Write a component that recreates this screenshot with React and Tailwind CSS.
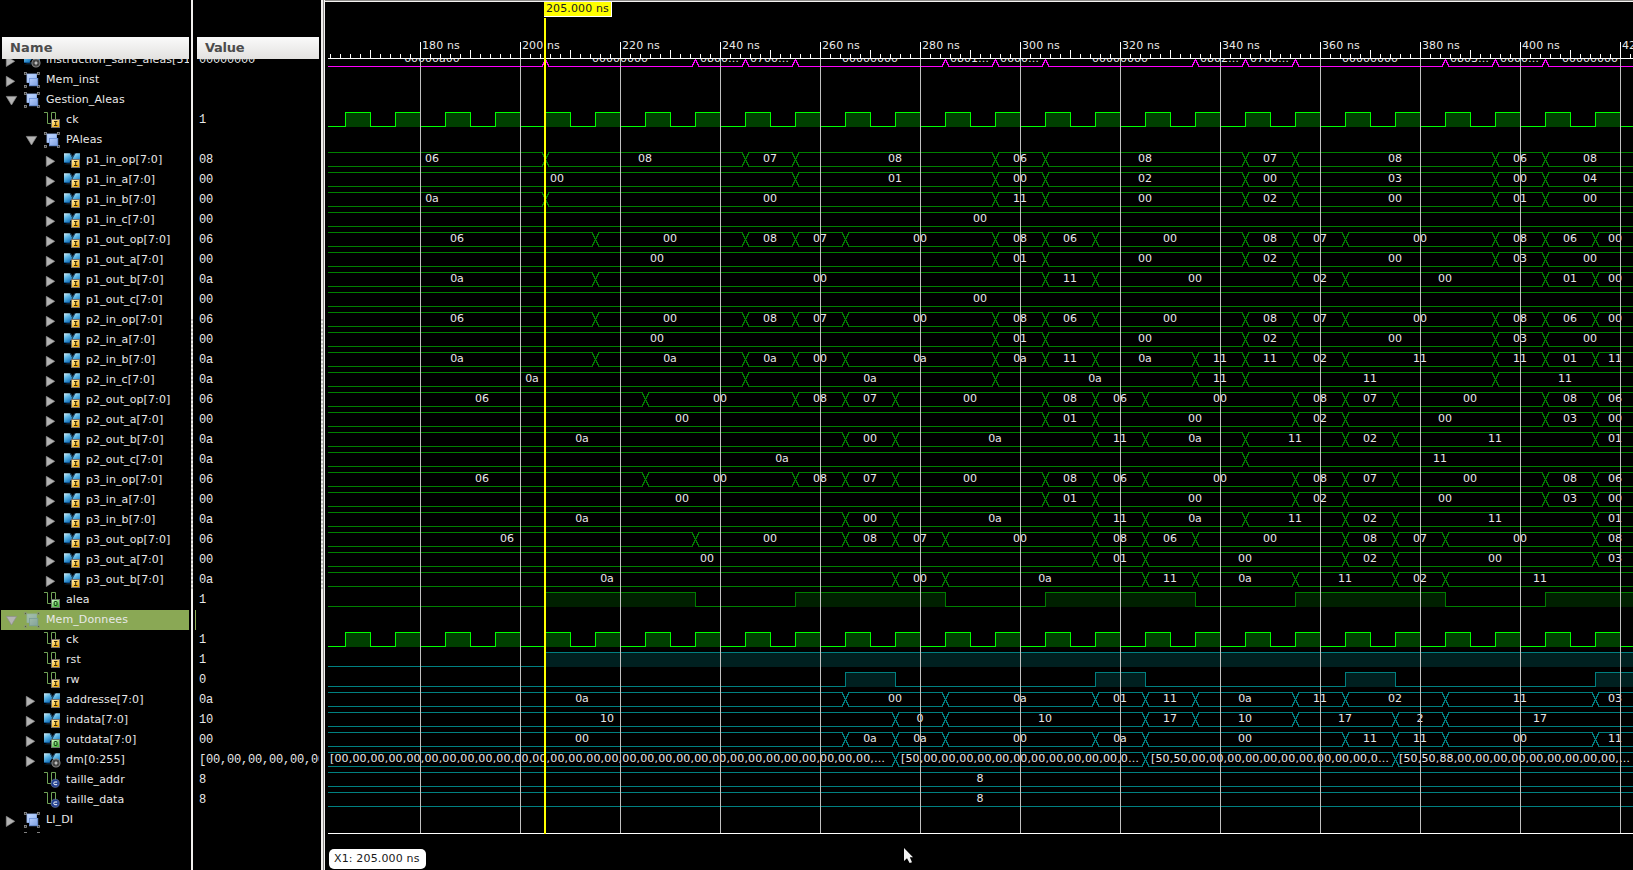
import React from "react";

const BRIGHT = "#00ff00";
const GREEN = "#008000";
const TEAL = "#008080";
const MAGENTA = "#ff00ff";

const bus = (color, times, values) => ({ kind: "bus", color, times, values });
const bit = (color, fill, times) => ({ kind: "bit", color, fill, times });

const clockTimes = Array.from({ length: 52 }, (_, i) => 165 + i * 5);
const clock = bit(BRIGHT, "#004000", clockTimes);

const opStage1 = bus(GREEN, [215, 245, 255, 265, 295, 305, 315, 345, 355, 365, 395, 405, 415], ["06", "00", "08", "07", "00", "08", "06", "00", "08", "07", "00", "08", "06", "00"]);
const aStage1 = bus(GREEN, [295, 305, 345, 355, 395, 405], ["00", "01", "00", "02", "00", "03", "00"]);
const opStage2 = bus(GREEN, [225, 255, 265, 275, 305, 315, 325, 355, 365, 375, 405, 415], ["06", "00", "08", "07", "00", "08", "06", "00", "08", "07", "00", "08", "06"]);
const aStage2 = bus(GREEN, [305, 315, 355, 365, 405, 415], ["00", "01", "00", "02", "00", "03", "00"]);
const bStage2 = bus(GREEN, [265, 275, 315, 325, 345, 365, 375, 415], ["0a", "00", "0a", "11", "0a", "11", "02", "11", "01"]);

const rows = [
  {
    name: "instruction_sans_aleas[31:0]", value: "00000000", level: 0, icon: "bus", badge: "gear", arrow: "right",
    wave: bus(MAGENTA, [205, 235, 245, 255, 285, 295, 305, 335, 345, 355, 385, 395, 405],
      ["00000a00", "00000000", "0800…", "0700…", "00000000", "0801…", "0600…", "00000000", "0802…", "0700…", "00000000", "0803…", "0600…", "00000000"]),
  },
  { name: "Mem_inst", level: 0, icon: "group", arrow: "right" },
  { name: "Gestion_Aleas", level: 0, icon: "group", arrow: "down" },
  { name: "ck", value: "1", level: 1, icon: "bit", badge: "I", wave: clock },
  { name: "PAleas", level: 1, icon: "group", arrow: "down" },
  ...[
    ["p1_in_op", "08", bus(GREEN, [205, 245, 255, 295, 305, 345, 355, 395, 405], ["06", "08", "07", "08", "06", "08", "07", "08", "06", "08"])],
    ["p1_in_a", "00", bus(GREEN, [255, 295, 305, 345, 355, 395, 405], ["00", "01", "00", "02", "00", "03", "00", "04"])],
    ["p1_in_b", "00", bus(GREEN, [205, 295, 305, 345, 355, 395, 405], ["0a", "00", "11", "00", "02", "00", "01", "00"])],
    ["p1_in_c", "00", bus(GREEN, [], ["00"])],
    ["p1_out_op", "06", opStage1],
    ["p1_out_a", "00", aStage1],
    ["p1_out_b", "0a", bus(GREEN, [215, 305, 315, 355, 365, 405, 415], ["0a", "00", "11", "00", "02", "00", "01", "00"])],
    ["p1_out_c", "00", bus(GREEN, [], ["00"])],
    ["p2_in_op", "06", opStage1],
    ["p2_in_a", "00", aStage1],
    ["p2_in_b", "0a", bus(GREEN, [215, 245, 255, 265, 295, 305, 315, 335, 345, 355, 365, 395, 405, 415], ["0a", "0a", "0a", "00", "0a", "0a", "11", "0a", "11", "11", "02", "11", "11", "01", "11"])],
    ["p2_in_c", "0a", bus(GREEN, [245, 295, 335, 345, 395], ["0a", "0a", "0a", "11", "11", "11"])],
    ["p2_out_op", "06", opStage2],
    ["p2_out_a", "00", aStage2],
    ["p2_out_b", "0a", bStage2],
    ["p2_out_c", "0a", bus(GREEN, [345], ["0a", "11"])],
    ["p3_in_op", "06", opStage2],
    ["p3_in_a", "00", aStage2],
    ["p3_in_b", "0a", bStage2],
    ["p3_out_op", "06", bus(GREEN, [235, 265, 275, 285, 315, 325, 335, 365, 375, 385, 415], ["06", "00", "08", "07", "00", "08", "06", "00", "08", "07", "00", "08"])],
    ["p3_out_a", "00", bus(GREEN, [315, 325, 365, 375, 415], ["00", "01", "00", "02", "00", "03"])],
    ["p3_out_b", "0a", bus(GREEN, [275, 285, 325, 335, 355, 375, 385], ["0a", "00", "0a", "11", "0a", "11", "02", "11"])],
  ].map(([n, value, wave]) => ({ name: n + "[7:0]", value, level: 2, icon: "bus", badge: "I", arrow: "right", wave })),
  { name: "alea", value: "1", level: 1, icon: "bit", badge: "O", wave: bit(GREEN, "#002000", [205, 235, 255, 285, 305, 335, 355, 385, 405]) },
  { name: "Mem_Donnees", level: 0, icon: "group", arrow: "down", selected: true },
  { name: "ck", value: "1", level: 1, icon: "bit", badge: "I", wave: clock },
  { name: "rst", value: "1", level: 1, icon: "bit", badge: "I", wave: bit(TEAL, "#002020", [205]) },
  { name: "rw", value: "0", level: 1, icon: "bit", badge: "I", wave: bit(TEAL, "#002020", [265, 275, 315, 325, 365, 375, 415]) },
  { name: "addresse[7:0]", value: "0a", level: 1, icon: "bus", badge: "I", arrow: "right", wave: bus(TEAL, [265, 285, 315, 325, 335, 355, 365, 385, 415], ["0a", "00", "0a", "01", "11", "0a", "11", "02", "11", "03"]) },
  { name: "indata[7:0]", value: "10", level: 1, icon: "bus", badge: "I", arrow: "right", wave: bus(TEAL, [275, 285, 325, 335, 355, 375, 385], ["10", "0", "10", "17", "10", "17", "2", "17"]) },
  { name: "outdata[7:0]", value: "00", level: 1, icon: "bus", badge: "O", arrow: "right", wave: bus(TEAL, [265, 275, 285, 315, 325, 365, 375, 385, 415], ["00", "0a", "0a", "00", "0a", "00", "11", "11", "00", "11"]) },
  {
    name: "dm[0:255]", value: "[00,00,00,00,00,00", level: 1, icon: "bus", badge: "gear", arrow: "right",
    wave: bus(TEAL, [275, 325, 375], [
      { text: "[" + "00,".repeat(30) + "…", x: 330, width: 555 },
      { text: "[50," + "00,".repeat(11) + "0…", x: 901, width: 238 },
      { text: "[50,50," + "00,".repeat(10) + "0…", x: 1151, width: 238 },
      { text: "[50,50,88," + "00,".repeat(9) + "…", x: 1399, width: 231 },
    ]),
  },
  { name: "taille_addr", value: "8", level: 1, icon: "bit", badge: "C", wave: bus(TEAL, [], ["8"]) },
  { name: "taille_data", value: "8", level: 1, icon: "bit", badge: "C", wave: bus(TEAL, [], ["8"]) },
  { name: "LI_DI", level: 0, icon: "group", arrow: "right" },
];

const toX = (t) => 520 + (t - 200) * 5;
const PLOT_LEFT = 328;
const PLOT_RIGHT = 1633;

function Arrow({ dir }) {
  return (
    <svg width="16" height="20" viewBox="0 0 16 20" className="shrink-0">
      {dir === "right" && <path d="M2.3 6.3 L10.7 11.3 L2.3 16.5 Z" fill="#b4b4b4" stroke="#8c8c8c" strokeWidth="0.7" />}
      {dir === "down" && <path d="M2.3 6.4 L12.7 6.4 L7.5 15 Z" fill="#b4b4b4" stroke="#8c8c8c" strokeWidth="0.7" />}
    </svg>
  );
}

function Badge({ type }) {
  if (type === "I")
    return (
      <g>
        <rect x="7.5" y="9.5" width="8" height="8" fill="url(#badgeInput)" stroke="#77706a" strokeWidth="1" />
        <path d="M10 11.5h3.4M11.7 11.5v4M10 15.5h3.4" stroke="#3a2c08" strokeWidth="1" fill="none" />
      </g>
    );
  if (type === "O")
    return (
      <g>
        <rect x="7.5" y="9.5" width="8" height="8" fill="url(#badgeOutput)" stroke="#6a776a" strokeWidth="1" />
        <rect x="10.2" y="11.5" width="2.8" height="4" rx="0.6" fill="none" stroke="#0d3a0d" strokeWidth="1" />
      </g>
    );
  if (type === "C")
    return (
      <g>
        <circle cx="11.2" cy="13.3" r="4.1" fill="#23418f" stroke="#8795bd" strokeWidth="0.5" />
        <path d="M13.2 12h-2.4q-1 0-1 1.3t1 1.4h2.4" stroke="#fff" strokeWidth="1" fill="none" />
      </g>
    );
  return (
    <g>
      <circle cx="12" cy="13" r="4" fill="#303030" stroke="#8a8a8a" strokeWidth="1.1" />
      <circle cx="12" cy="13" r="2.7" fill="none" stroke="#5d5d5d" strokeWidth="0.6" />
      <path d="M10.3 13h3.4M12 11.3v3.4" stroke="#e6e6e6" strokeWidth="1.1" />
    </g>
  );
}

function Icon({ icon, badge, faded }) {
  return (
    <svg width="20" height="20" viewBox="0 0 20 20" className={faded ? "shrink-0 opacity-50" : "shrink-0"}>
      {icon === "group" && (
        <g>
          {[[0, 2], [13, 2], [0, 15], [13, 15]].map(([x, y]) => (
            <rect key={x + "-" + y} x={x + 0.5} y={y + 0.5} width="2" height="2" fill="#222" stroke="#8f8f8f" strokeWidth="0.8" />
          ))}
          <rect x="3" y="4" width="9.5" height="8.5" fill="url(#groupBack)" stroke="#9dbcf4" strokeWidth="0.8" />
          <rect x="5.5" y="8.5" width="8.3" height="7.3" fill="url(#groupFront)" stroke="#6c92d6" strokeWidth="0.8" />
        </g>
      )}
      {icon === "bit" && (
        <g>
          <path d="M0 2.5H3.5V13.5H7.5V2.5H11.5V13.5" fill="none" stroke="#6fa256" strokeWidth="1" />
          <Badge type={badge} />
        </g>
      )}
      {icon === "bus" && (
        <g>
          <path d="M0 14.5L5 12L8.5 12V14.5Z" fill="#0d2233" />
          <path d="M0 3.3H5.8L8.3 8L5 13H0Z" fill="url(#busBody)" />
          <path d="M16 3.3H11.6L8.3 8L11 13H16Z" fill="url(#busBody)" />
          <path d="M6.8 3.3L8.7 6L10.6 3.3L11.6 3.3L8.8 8.6L5.8 3.3Z" fill="#1d4a6c" />
          <path d="M0 12.5H5.5" stroke="#0f5896" strokeWidth="1" />
          <Badge type={badge} />
        </g>
      )}
    </svg>
  );
}

const padding = ["pl-[4px]", "pl-[24px]", "pl-[44px]"];

function NameRow({ row }) {
  return (
    <div className={"flex h-5 shrink-0 items-start overflow-hidden " + padding[row.level] + (row.selected ? " ml-px bg-[#8aa855]" : " ml-px")}>
      <div className="-ml-px flex">
        <div className="w-5 shrink-0"><Arrow dir={row.arrow} /></div>
        <Icon icon={row.icon} badge={row.badge} faded={row.selected} />
        <span className="pl-[2px] text-[11px] leading-[19px] tracking-[0.1px] whitespace-pre text-[#e8e8e8]">{row.name}</span>
      </div>
    </div>
  );
}

function BusWave({ wave, top }) {
  const { times, values, color } = wave;
  const xs = times.map(toX);
  const bottom = top + 14;
  let up = `M${PLOT_LEFT} ${top + 0.5}`;
  let down = `M${PLOT_LEFT} ${bottom + 0.5}`;
  xs.forEach((x) => {
    up += `H${x - 3}M${x + 4} ${top + 0.5}`;
    down += `H${x - 3}M${x + 4} ${bottom + 0.5}`;
  });
  const crosses = xs
    .map((x) => `M${x - 3} ${top + 0.5}L${x + 4} ${bottom + 0.5}M${x + 4} ${top + 0.5}L${x - 3} ${bottom + 0.5}`)
    .join("");
  return (
    <g>
      <path d={up + `H${PLOT_RIGHT}` + down + `H${PLOT_RIGHT}` + crosses} stroke={color} fill="none" shapeRendering="crispEdges" />
      {values.map((v, i) => {
        if (typeof v === "object")
          return <text key={i} x={v.x} y={top + 10} textLength={v.width}>{v.text}</text>;
        const a = i === 0 ? 319 : xs[i - 1];
        const b = i === xs.length ? 1635 : xs[i];
        if (v.endsWith("…")) return <text key={i} x={a + 5} y={top + 10}>{v}</text>;
        const mid = xs.length === 0 ? 980 : (a + b) / 2;
        return <text key={i} x={mid} y={top + 10} textAnchor="middle">{v}</text>;
      })}
    </g>
  );
}

function BitWave({ wave, top }) {
  const xs = wave.times.map(toX).filter((x) => x <= PLOT_RIGHT);
  const hi = top + 0.5;
  const lo = top + 14.5;
  let d = `M${PLOT_LEFT} ${lo}`;
  xs.forEach((x, i) => {
    d += `H${x + 0.5}V${i % 2 === 0 ? hi : lo}`;
  });
  d += `H${PLOT_RIGHT + 2}`;
  return (
    <g shapeRendering="crispEdges">
      {xs.map((x, i) =>
        i % 2 === 0 ? <rect key={i} x={x} y={top} width={(xs[i + 1] ?? PLOT_RIGHT) - x} height="15" fill={wave.fill} /> : null
      )}
      <path d={d} stroke={wave.color} fill="none" />
    </g>
  );
}

const majors = [180, 200, 220, 240, 260, 280, 300, 320, 340, 360, 380, 400, 420];
const ticks = Array.from({ length: 131 }, (_, i) => 162 + i * 2).filter((t) => toX(t) < PLOT_RIGHT);

function WaveChart() {
  return (
    <svg width="1308" height="834" viewBox="325 0 1308 834" className="block shrink-0" fontFamily="DejaVu Sans, sans-serif" fontSize="11" fill="#e8e8e8">
      <defs>
        <clipPath id="plotArea"><rect x="328" y="59" width="1305" height="775" /></clipPath>
      </defs>
      <g shapeRendering="crispEdges">
        <rect x="325" y="0" width="1308" height="1" fill="#8d8b89" />
        <rect x="325" y="1" width="1308" height="1" fill="#f4f2f0" />
      </g>
      <g clipPath="url(#plotArea)">
        {rows.map((row, i) => {
          if (!row.wave) return null;
          const top = 52 + i * 20;
          return row.wave.kind === "bus" ? <BusWave key={i} wave={row.wave} top={top} /> : <BitWave key={i} wave={row.wave} top={top} />;
        })}
      </g>
      <g shapeRendering="crispEdges">
        {majors.map((t) => <rect key={t} x={toX(t)} y="59" width="1" height="775" fill="#c0c0c0" />)}
        {ticks.map((t) => {
          const y = t % 20 === 0 ? 42 : t % 10 === 0 ? 50 : 54;
          return <rect key={t} x={toX(t)} y={y} width="1" height={58 - y} fill="#fff" />;
        })}
        <rect x="328" y="58" width="1305" height="1" fill="#fff" />
        <rect x="328" y="833" width="1305" height="1" fill="#fff" />
      </g>
      {majors.map((t) => <text key={t} x={toX(t) + 2} y="49" className="tracking-[0.12px]">{t} ns</text>)}
      <g shapeRendering="crispEdges">
        <rect x="544" y="18" width="2" height="816" fill="#ffff00" />
        <rect x="544" y="2" width="68" height="15" fill="#fff" />
        <rect x="544" y="2" width="67" height="14" fill="#ffff00" />
      </g>
      <text x="546" y="12" fill="#202020" className="tracking-[0.12px]">205.000 ns</text>
    </svg>
  );
}

function SharedGradients() {
  return (
    <svg width="0" height="0" className="absolute">
      <defs>
        <linearGradient id="groupBack" x1="0" y1="0" x2="1" y2="1"><stop offset="0" stopColor="#c6dbff" /><stop offset="1" stopColor="#8db0f2" /></linearGradient>
        <linearGradient id="groupFront" x1="0" y1="0" x2="1" y2="1"><stop offset="0" stopColor="#b4cbfa" /><stop offset="1" stopColor="#7d9fe0" /></linearGradient>
        <linearGradient id="busBody" x1="0" y1="0" x2="0.5" y2="1"><stop offset="0" stopColor="#d2effa" /><stop offset="0.45" stopColor="#62b9e6" /><stop offset="1" stopColor="#1470b8" /></linearGradient>
        <linearGradient id="badgeInput" x1="0" y1="0" x2="0.6" y2="1"><stop offset="0" stopColor="#fff0b8" /><stop offset="1" stopColor="#f5b010" /></linearGradient>
        <linearGradient id="badgeOutput" x1="0" y1="0" x2="0.6" y2="1"><stop offset="0" stopColor="#d8ffd0" /><stop offset="1" stopColor="#48b83c" /></linearGradient>
      </defs>
    </svg>
  );
}

function Header({ children, className }) {
  return (
    <div className={"flex h-[22px] shrink-0 items-center bg-linear-to-b from-[#fafafa] to-[#e3e2e0] pl-2 text-[13px] font-bold text-[#4c4c4c] " + className}>
      {children}
    </div>
  );
}

function Splitter() {
  return (
    <div className="flex w-[2px] shrink-0 flex-col">
      <div className="h-[317px] bg-[#f1efed]" />
      <div className="h-[272px] bg-[repeating-linear-gradient(to_bottom,#f1efed_0px,#f1efed_2px,#c4c2c0_2px,#c4c2c0_4px)]" />
      <div className="flex-1 bg-[#f1efed]" />
    </div>
  );
}

export default function App() {
  return (
    <div className="relative flex h-[870px] w-[1633px] overflow-hidden bg-black font-['DejaVu_Sans',sans-serif]">
      <SharedGradients />
      <div className="flex w-[189px] shrink-0 flex-col pt-[37px]">
        <div className="pl-[2px]"><Header className="tracking-[0.2px]">Name</Header></div>
        <div className="flex h-[774px] flex-col overflow-hidden">
          <div className="-mt-[9px] flex shrink-0 flex-col">
            {rows.map((row, i) => <NameRow key={i} row={row} />)}
            <div className="flex gap-[10px] pt-[2px] pl-6">
              <div className="h-px w-[3px] bg-[#808080]" />
              <div className="h-px w-[3px] bg-[#808080]" />
            </div>
          </div>
        </div>
      </div>
      <div className="ml-[2px] flex shrink-0"><Splitter /></div>
      <div className="flex w-[126px] shrink-0 flex-col pt-[37px] pl-[2px]">
        <div className="pl-[2px]"><Header className="tracking-[-0.3px]">Value</Header></div>
        <div className="flex h-[774px] flex-col overflow-hidden">
          <div className="-mt-[9px] flex shrink-0 flex-col">
            {rows.map((row, i) => (
              <div key={i} className={"h-5 shrink-0 overflow-hidden border-l pl-[3px] font-['Liberation_Mono',monospace] text-[12px] leading-[20px] tracking-[-0.2px] whitespace-pre text-[#e8e8e8] " + (row.selected ? "border-[#8aa855]" : "border-transparent")}>
                {row.value}
              </div>
            ))}
          </div>
        </div>
      </div>
      <div className="ml-[2px] flex w-[4px] shrink-0">
        <Splitter />
        <div className="w-px bg-[#8d8b89]" />
        <div className="w-px bg-[#f4f2f0]" />
      </div>
      <div className="flex w-[1308px] shrink-0 flex-col">
        <WaveChart />
        <div className="mt-[15px] ml-1 flex h-5 w-[97px] items-center rounded-[5px] bg-white pl-[5px] text-[11px] tracking-[0.15px] whitespace-nowrap text-[#1a1a1a]">X1: 205.000 ns</div>
      </div>
      <svg width="12" height="18" viewBox="0 0 12 18" className="absolute top-[847px] left-[903px]">
        <path d="M1 1V14L4 11.2L6.6 16L9 15.2L6.8 10.3H10Z" fill="#f2f2f2" />
      </svg>
    </div>
  );
}
